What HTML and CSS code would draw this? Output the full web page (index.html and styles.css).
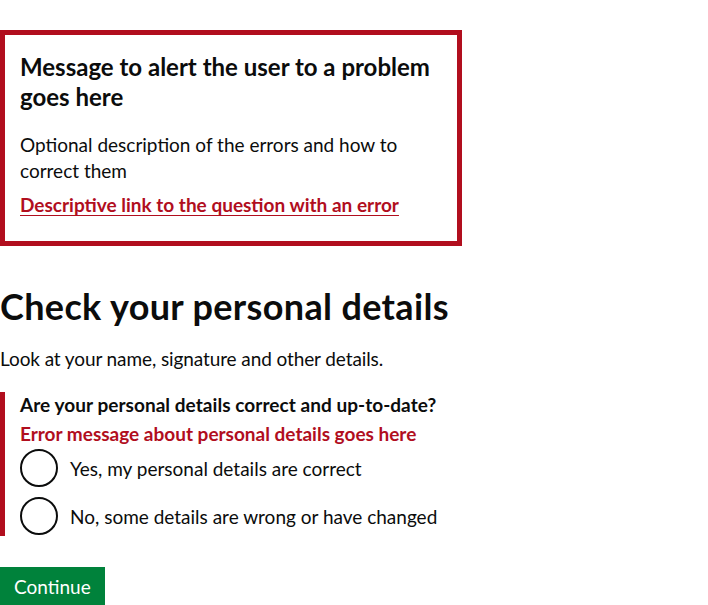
FILE: index.html
```html
<!DOCTYPE html>
<html lang="en">
<head>
<meta charset="utf-8">
<title>Check your personal details</title>
<link rel="stylesheet" href="styles.css">
</head>
<body>
<main class="page">
  <div class="error-summary" role="alert">
    <h2 class="error-summary__title">Message to alert the user to a problem goes here</h2>
    <p class="error-summary__body">Optional description of the errors and how to correct them</p>
    <a class="error-summary__link" href="#personal-details">Descriptive link to the question with an error</a>
  </div>

  <h1 class="heading-l">Check your personal details</h1>
  <p class="body">Look at your name, signature and other details.</p>

  <div class="form-group form-group--error">
    <fieldset class="fieldset" id="personal-details">
      <legend class="legend">Are your personal details correct and up-to-date?</legend>
      <span class="error-message">Error message about personal details goes here</span>
      <div class="radios">
        <label class="radio">
          <input class="radio__input" type="radio" name="details" value="yes">
          <span class="radio__circle"></span>
          <span class="radio__label">Yes, my personal details are correct</span>
        </label>
        <label class="radio">
          <input class="radio__input" type="radio" name="details" value="no">
          <span class="radio__circle"></span>
          <span class="radio__label">No, some details are wrong or have changed</span>
        </label>
      </div>
    </fieldset>
  </div>

  <button class="button" type="submit">Continue</button>
</main>
</body>
</html>
```

FILE: styles.css
```css
* { box-sizing: border-box; }

html, body {
  margin: 0;
  padding: 0;
  background: #ffffff;
}

body {
  font-family: Lato, "Liberation Sans", Arial, sans-serif;
  color: #0b0c0c;
  -webkit-font-smoothing: antialiased;
}

.page {
  padding-top: 30px;
}

.error-summary {
  width: 462px;
  border: 5px solid #b10e1e;
  padding: 17px 15px 24px;
  margin-bottom: 40px;
}

.error-summary__title {
  margin: 0 0 20px;
  font-size: 24px;
  line-height: 30px;
  font-weight: 700;
}

.error-summary__body {
  margin: 0 0 8px;
  font-size: 19px;
  line-height: 26px;
}

.error-summary__link {
  display: inline-block;
  color: #b10e1e;
  font-weight: 700;
  font-size: 19px;
  line-height: 25px;
  text-decoration: underline;
  text-underline-offset: 3px;
}

.heading-l {
  margin: 0 0 20px;
  font-size: 36px;
  line-height: 40px;
  font-weight: 700;
  letter-spacing: 0.35px;
}

.body {
  margin: 0 0 21px;
  font-size: 19px;
  line-height: 25px;
  letter-spacing: -0.1px;
}

.form-group {
  margin: 0 0 31px;
}

.form-group--error {
  border-left: 5px solid #b10e1e;
  padding-left: 15px;
}

.fieldset {
  margin: 0;
  padding: 0;
  border: 0;
  min-width: 0;
}

.legend {
  padding: 0;
  margin: 0;
  font-size: 19px;
  line-height: 25px;
  font-weight: 700;
  letter-spacing: 0.05px;
}

.error-message {
  display: block;
  margin: 4px 0 2px;
  color: #b10e1e;
  font-size: 19px;
  line-height: 25px;
  font-weight: 700;
}

.radios {
  display: flex;
  flex-direction: column;
  gap: 8px;
}

.radio {
  display: flex;
  align-items: center;
  min-height: 40px;
  cursor: pointer;
}

.radio__input {
  position: absolute;
  opacity: 0;
  width: 0;
  height: 0;
  margin: 0;
}

.radio__circle {
  flex: none;
  width: 38px;
  height: 38px;
  margin: 1px 0;
  border: 2px solid #0b0c0c;
  border-radius: 50%;
  background: #fff;
}

.radio__label {
  padding-left: 12px;
  font-size: 19px;
  line-height: 25px;
}

.button {
  display: inline-block;
  margin: 0;
  padding: 8px 12px 7px;
  border: 2px solid transparent;
  border-radius: 0;
  background: #00823b;
  box-shadow: 0 2px 0 #003618;
  color: #ffffff;
  font-family: inherit;
  font-size: 19px;
  line-height: 19px;
  cursor: pointer;
}
```
